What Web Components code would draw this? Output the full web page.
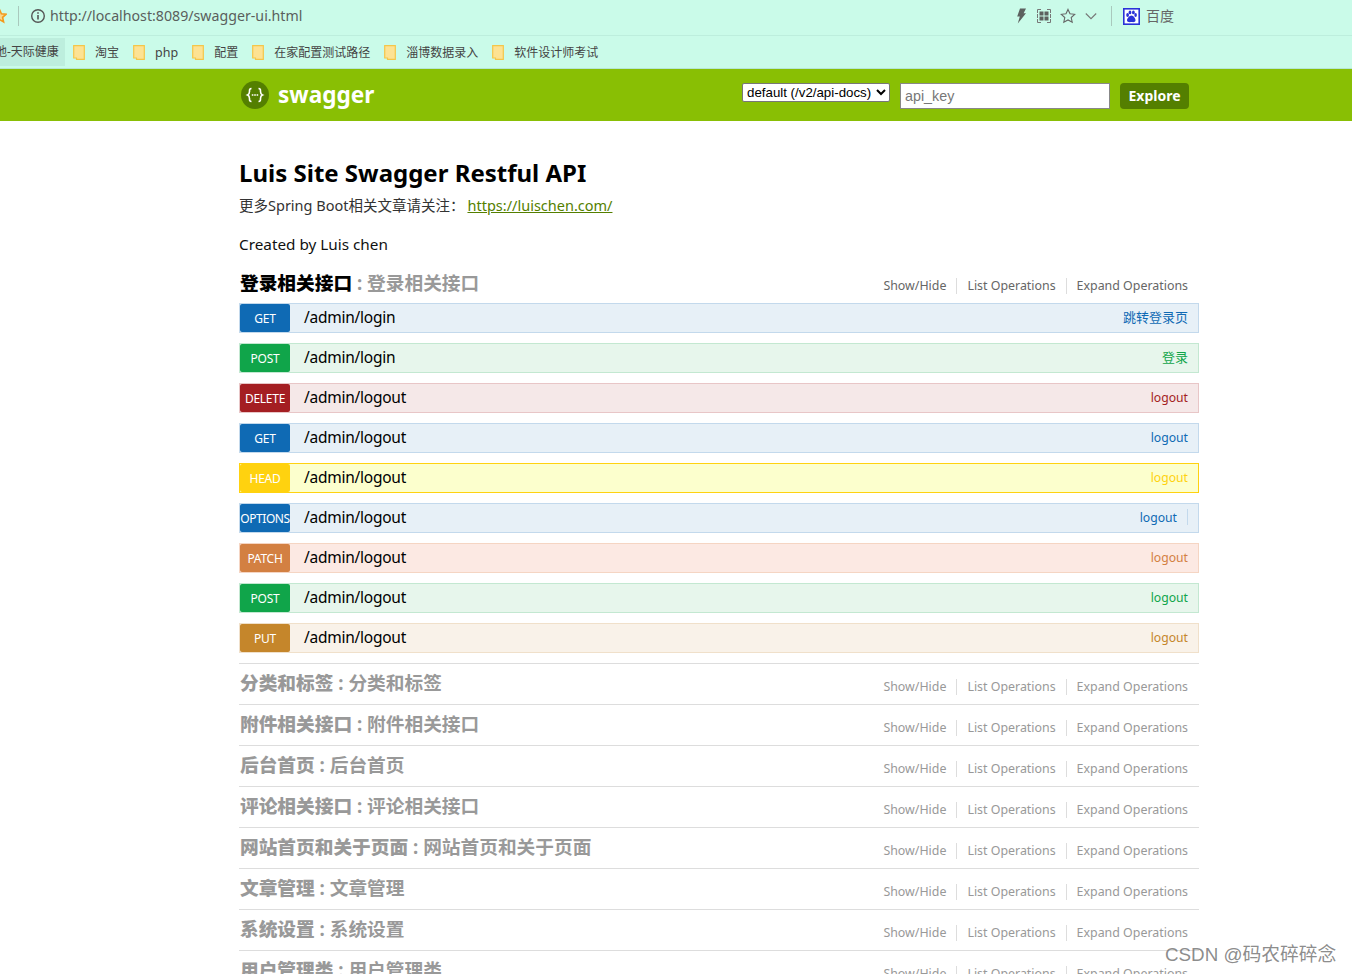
<!DOCTYPE html>
<html lang="zh">
<head>
<meta charset="utf-8">
<title>Swagger UI</title>
<style>
html, body { margin: 0; padding: 0; height: 974px; overflow: hidden; background: #fff; }
body { font-family: "Noto Sans", "Noto Sans CJK SC", sans-serif; }
</style>
</head>
<body>
<browser-bar url="http://localhost:8089/swagger-ui.html"></browser-bar>
<bookmark-bar></bookmark-bar>
<swagger-header></swagger-header>
<main-column>
  <api-info></api-info>
  <api-group name="登录相关接口" open>
    <api-op method="get" path="/admin/login" summary="跳转登录页"></api-op>
    <api-op method="post" path="/admin/login" summary="登录"></api-op>
    <api-op method="delete" path="/admin/logout" summary="logout"></api-op>
    <api-op method="get" path="/admin/logout" summary="logout"></api-op>
    <api-op method="head" path="/admin/logout" summary="logout"></api-op>
    <api-op method="options" path="/admin/logout" summary="logout"></api-op>
    <api-op method="patch" path="/admin/logout" summary="logout"></api-op>
    <api-op method="post" path="/admin/logout" summary="logout"></api-op>
    <api-op method="put" path="/admin/logout" summary="logout"></api-op>
  </api-group>
  <api-group name="分类和标签"></api-group>
  <api-group name="附件相关接口"></api-group>
  <api-group name="后台首页"></api-group>
  <api-group name="评论相关接口"></api-group>
  <api-group name="网站首页和关于页面"></api-group>
  <api-group name="文章管理"></api-group>
  <api-group name="系统设置"></api-group>
  <api-group name="用户管理类"></api-group>
</main-column>
<water-mark>CSDN @码农碎碎念</water-mark>

<script>
const CJK = '"Noto Sans", "Noto Sans CJK SC", sans-serif';

class BrowserBar extends HTMLElement {
    constructor() {
        super();
        this.shadowDOM = this.attachShadow({mode: "open"});
    }
    connectedCallback() {
        this.shadowDOM.innerHTML = `
        <style>
            :host { display: flex; align-items: center; height: 35px; background: #cafbe9; border-bottom: 1px solid #bdeedd; color: #555; font-family: ${CJK}; overflow: hidden; }
            .row { display: flex; align-items: center; width: 100%; height: 32px; margin-bottom: 3px; }
            svg { display: block; flex: none; }
            .star { margin-left: -8px; }
            .sep { width: 1px; height: 20px; background: #a9c9bd; flex: none; }
            .url { margin-left: 4px; font-size: 14.2px; line-height: 16px; color: #5a5f5d; flex: 1; }
            .tools { display: flex; align-items: center; }
            .baidu { font-size: 14px; line-height: 16px; color: #666; margin-left: 6px; margin-right: 178px; }
        </style>
        <div class="row">
        <svg class="star" width="15" height="16" viewBox="0 0 15 16"><path d="M7.5 1.5l1.9 4.3 4.6.5-3.4 3.1 1 4.6-4.1-2.4-4.1 2.4 1-4.6L1 6.3l4.6-.5z" fill="#fbd68b" stroke="#f39a1d" stroke-width="1.6"/></svg>
        <div class="sep" style="margin-left:11px"></div>
        <svg style="margin-left:11px" width="16" height="16" viewBox="0 0 16 16"><circle cx="8" cy="8" r="6.3" fill="none" stroke="#555" stroke-width="1.4"/><path d="M8 7v4.4M8 4.300v1.500" stroke="#555" stroke-width="1.6"/></svg>
        <div class="url">${this.getAttribute("url")}</div>
        <div class="tools">
            <svg width="12" height="16" viewBox="0 0 12 16"><path d="M5 .5L11 .5 8.600 5.200 11 5.200 2.800 15.500 4.800 8.400 2.200 8.400z" fill="#5c615f"/></svg>
            <svg style="margin-left:9px" width="16" height="16" viewBox="0 0 16 16"><path d="M1.500 5V1.500H5M11 1.500h3.500V5M1.500 11v3.500H5M11 14.500h3.500V11" fill="none" stroke="#777" stroke-width="1"/><path d="M1.500 6v4M14.500 6v4" stroke="#777" stroke-width="1"/><path d="M3.500 3.500h4v4h-4zM8.500 3.500h4v4h-4zM3.500 8.500h4v4h-4zM8.500 8.500h4v4h-4z" fill="#5c615f"/></svg>
            <svg style="margin-left:8px" width="16" height="16" viewBox="0 0 16 16"><path d="M8 1.400l2 4.300 4.700.6-3.500 3.200 1 4.700L8 11.900l-4.200 2.300 1-4.700-3.500-3.200 4.700-.6z" fill="none" stroke="#666" stroke-width="1.1"/></svg>
            <svg style="margin-left:9px" width="12" height="16" viewBox="0 0 12 16"><path d="M.8 5.500L6 10.700l5.200-5.200" fill="none" stroke="#777" stroke-width="1.1"/></svg>
            <div class="sep" style="margin-left:14px"></div>
            <svg style="margin-left:11px" width="17" height="17" viewBox="0 0 17 17"><rect x=".8" y=".8" width="15.400" height="15.400" fill="#fff" stroke="#2a32d8" stroke-width="1.600"/><g fill="#2a32d8"><ellipse cx="4.600" cy="7" rx="1.400" ry="2"/><ellipse cx="7" cy="4.400" rx="1.400" ry="1.900"/><ellipse cx="10.400" cy="4.400" rx="1.400" ry="1.900"/><ellipse cx="12.600" cy="7" rx="1.300" ry="1.900"/><path d="M8.500 7.500c2 0 4 3 4 4.800 0 2-2 2.200-4 1.800-2 .4-4.500.2-4.500-1.800 0-1.800 2.500-4.800 4.500-4.800z"/></g></svg>
            <div class="baidu">百度</div>
        </div>
        </div>`;
    }
}

class BookmarkBar extends HTMLElement {
    constructor() {
        super();
        this.shadowDOM = this.attachShadow({mode: "open"});
    }
    connectedCallback() {
        const names = ["淘宝", "php", "配置", "在家配置测试路径", "淄博数据录入", "软件设计师考试"];
        const page = `<svg width="12" height="15" viewBox="0 0 12 15"><path d="M.7.700h10.600v13.600H3.500V13H.7z" fill="#fde293" stroke="#f4c64a" stroke-width="1.200"/></svg>`;
        this.shadowDOM.innerHTML = `
        <style>
            :host { display: flex; align-items: center; height: 32px; background: #cafbe9; border-bottom: 1px solid #b5e6d2; overflow: hidden; font-family: ${CJK}; font-size: 12px; color: #444; }
            .first { margin-left: -13px; width: 78px; height: 28px; box-sizing: border-box; padding-left: 8px; background: #bdeedd; line-height: 28px; flex: none; white-space: nowrap; }
            .item { display: flex; align-items: center; flex: none; }
            .item span { margin-left: 10px; line-height: 17px; padding-top: 1px; }
            .item + .item { margin-left: 14px; }
            .first + .item { margin-left: 8px; }
            .item:nth-of-type(3) span { font-size: 12.5px; }
        </style>
        <div class="first">地-天际健康</div>
        ${names.map(n => `<div class="item">${page}<span>${n}</span></div>`).join("")}`;
    }
}

class SwaggerHeader extends HTMLElement {
    constructor() {
        super();
        this.shadowDOM = this.attachShadow({mode: "open"});
    }
    connectedCallback() {
        this.shadowDOM.innerHTML = `
        <style>
            :host { display: block; height: 52px; background: #89bf04; }
            .wrap { width: 960px; height: 52px; margin-left: 239px; display: flex; align-items: center; box-sizing: border-box; padding: 2px 10px 0 0; }
            .logo { display: flex; align-items: center; color: #fff; font: bold 22.6px ${CJK}; flex: 1; padding-left: 2px; margin-top: -2px; }
            .logo svg { margin-right: 9px; }
            .logo span { line-height: 28px; padding-bottom: 1px; }
            select { width: 148px; height: 19px; margin: 0 10px 7px 0; padding: 0; font: 13.3px "Liberation Sans", sans-serif; background: #fff; color: #000; border: 1px solid #777; border-radius: 2px; box-sizing: border-box; }
            input { width: 210px; height: 26px; box-sizing: border-box; padding: 3px 4px; font: 14.3px "Liberation Sans", sans-serif; border: 1px solid #888; border-radius: 0; margin: 0 10px 0 0; }
            input::placeholder { color: #777; opacity: 1; }
            .explore { width: 69px; height: 26px; background: #547f00; color: #fff; font: bold 14px ${CJK}; border: 0; border-radius: 4px; padding: 0 0 2px; }
        </style>
        <div class="wrap">
            <div class="logo">
                <svg width="28" height="28" viewBox="0 0 28 28">
                    <circle cx="14" cy="14" r="14" fill="#547f00"/>
                    <path d="M10.500 7.500c-2.200 0-2 1.400-2 3 0 1.700-.4 2.900-1.900 3.500 1.500.6 1.900 1.800 1.900 3.500 0 1.600-.2 3 2 3M17.500 7.500c2.200 0 2 1.400 2 3 0 1.700.4 2.900 1.900 3.500-1.500.6-1.900 1.800-1.900 3.500 0 1.600.2 3-2 3" fill="none" stroke="#fff" stroke-width="1.600"/>
                    <path d="M10.800 14h1.600M13.200 14h1.600M15.600 14h1.600" stroke="#fff" stroke-width="1.600"/>
                </svg>
                <span>swagger</span>
            </div>
            <select><option>default (/v2/api-docs)</option></select>
            <input placeholder="api_key">
            <button class="explore">Explore</button>
        </div>`;
    }
}

class MainColumn extends HTMLElement {
    constructor() {
        super();
        this.shadowDOM = this.attachShadow({mode: "open"});
        this.shadowDOM.innerHTML = `
        <style>
            :host { display: block; width: 960px; margin-left: 239px; padding-top: 36px; }
        </style>
        <slot></slot>`;
    }
}

class ApiInfo extends HTMLElement {
    constructor() {
        super();
        this.shadowDOM = this.attachShadow({mode: "open"});
    }
    connectedCallback() {
        this.shadowDOM.innerHTML = `
        <style>
            :host { display: block; color: #000; font-family: ${CJK}; height: 109px; }
            h1 { margin: 0; font-size: 24px; font-weight: bold; line-height: 32px; height: 32px; }
            p { margin: 0; font-size: 14.5px; line-height: 20px; color: #333; }
            .desc { margin-top: 6px; }
            .by { margin-top: 19px; font-size: 15.3px; color: #111; }
            a { color: #547f00; text-decoration: underline; margin-left: 3px; }
        </style>
        <h1>Luis Site Swagger Restful API</h1>
        <p class="desc">更多Spring Boot相关文章请关注：<a>https://luischen.com/</a></p>
        <p class="by">Created by Luis chen</p>`;
    }
}

class ApiGroup extends HTMLElement {
    constructor() {
        super();
        this.shadowDOM = this.attachShadow({mode: "open"});
    }
    connectedCallback() {
        const name = this.getAttribute("name");
        const open = this.hasAttribute("open");
        this.shadowDOM.innerHTML = `
        <style>
            :host { display: block; font-family: ${CJK}; }
            :host(:not([open])) { border-top: 1px solid #ddd; height: 40px; }
            :host([open]) { margin-bottom: 10px; }
            .head { display: flex; align-items: center; height: ${open ? "37px" : "40px"}; box-sizing: border-box; padding-bottom: ${open ? "3px" : "2px"}; }
            h2 { margin: 0 0 0 1px; flex: 1; font-size: 18.7px; font-weight: bold; color: #999; white-space: nowrap; line-height: 24px; }
            h2 b { color: ${open ? "#000" : "#999"}; }
            ul { display: flex; margin: 0; padding: 0 11px 0 0; list-style: none; font-size: 12.4px; color: ${open ? "#666" : "#999"}; position: relative; top: ${open ? "3px" : "4px"}; }
            li { padding: 0 10px; border-right: 1px solid #ddd; line-height: 16px; }
            li:last-child { border: 0; padding-right: 0; }
        </style>
        <div class="head">
            <h2><b>${name}</b> : ${name}</h2>
            <ul><li>Show/Hide</li><li>List Operations</li><li>Expand Operations</li></ul>
        </div>
        <div><slot></slot></div>`;
    }
}

const METHODS = {
    get:     {bg: "#e7f0f7", line: "#c3d9ec", badge: "#0f6ab4"},
    post:    {bg: "#e7f6ec", line: "#c3e8d1", badge: "#10a54a"},
    delete:  {bg: "#f5e8e8", line: "#e8c6c7", badge: "#a41e22"},
    head:    {bg: "#fcffcd", line: "#ffd20f", badge: "#ffd20f"},
    options: {bg: "#e7f0f7", line: "#c3d9ec", badge: "#0f6ab4"},
    patch:   {bg: "#fce9e3", line: "#f5d5c3", badge: "#d38042"},
    put:     {bg: "#f9f2e9", line: "#f0e0ca", badge: "#c5862b"}
};

class ApiOp extends HTMLElement {
    constructor() {
        super();
        this.shadowDOM = this.attachShadow({mode: "open"});
    }
    connectedCallback() {
        const method = this.getAttribute("method");
        const c = METHODS[method];
        const summary = this.getAttribute("summary");
        const isLatin = /^[a-z]+$/i.test(summary);
        this.shadowDOM.innerHTML = `
        <style>
            :host { display: flex; align-items: stretch; height: 30px; box-sizing: border-box; margin-bottom: 10px; background: ${c.bg}; border: 1px solid ${c.line}; font-family: ${CJK}; padding-right: 10px; }
            .badge { flex: none; width: 50px; box-sizing: border-box; padding-top: 1px; background: ${c.badge}; color: #fff; font-size: 12px; letter-spacing: ${method === "options" ? "-.45px" : "-.25px"}; line-height: 27px; text-align: center; border-radius: 2px; text-transform: uppercase; white-space: nowrap; }
            .path { flex: 1; margin-left: 14px; font-size: 15.5px; letter-spacing: -.25px; line-height: 26px; color: #000; }
            .sum { font-size: ${isLatin ? "12.2px" : "13px"}; line-height: ${isLatin ? "28px" : "26px"}; color: ${c.badge}; }
            .rule { width: 1px; height: 16px; margin: 5px 0 0 10px; background: #c3d9ec; }
        </style>
        <div class="badge">${method}</div>
        <div class="path">${this.getAttribute("path")}</div>
        <div class="sum">${summary}</div>
        ${method === "options" ? '<div class="rule"></div>' : ""}`;
    }
}

class WaterMark extends HTMLElement {
    constructor() {
        super();
        this.shadowDOM = this.attachShadow({mode: "open"});
        this.shadowDOM.innerHTML = `
        <style>
            :host { position: absolute; left: 1165px; top: 944px; font: 18.8px/22px "Liberation Sans", "Noto Sans CJK SC", sans-serif; color: rgba(110, 110, 110, .8); white-space: nowrap; }
        </style>
        <slot></slot>`;
    }
}

customElements.define("browser-bar", BrowserBar);
customElements.define("bookmark-bar", BookmarkBar);
customElements.define("swagger-header", SwaggerHeader);
customElements.define("main-column", MainColumn);
customElements.define("api-info", ApiInfo);
customElements.define("api-group", ApiGroup);
customElements.define("api-op", ApiOp);
customElements.define("water-mark", WaterMark);
</script>
</body>
</html>
